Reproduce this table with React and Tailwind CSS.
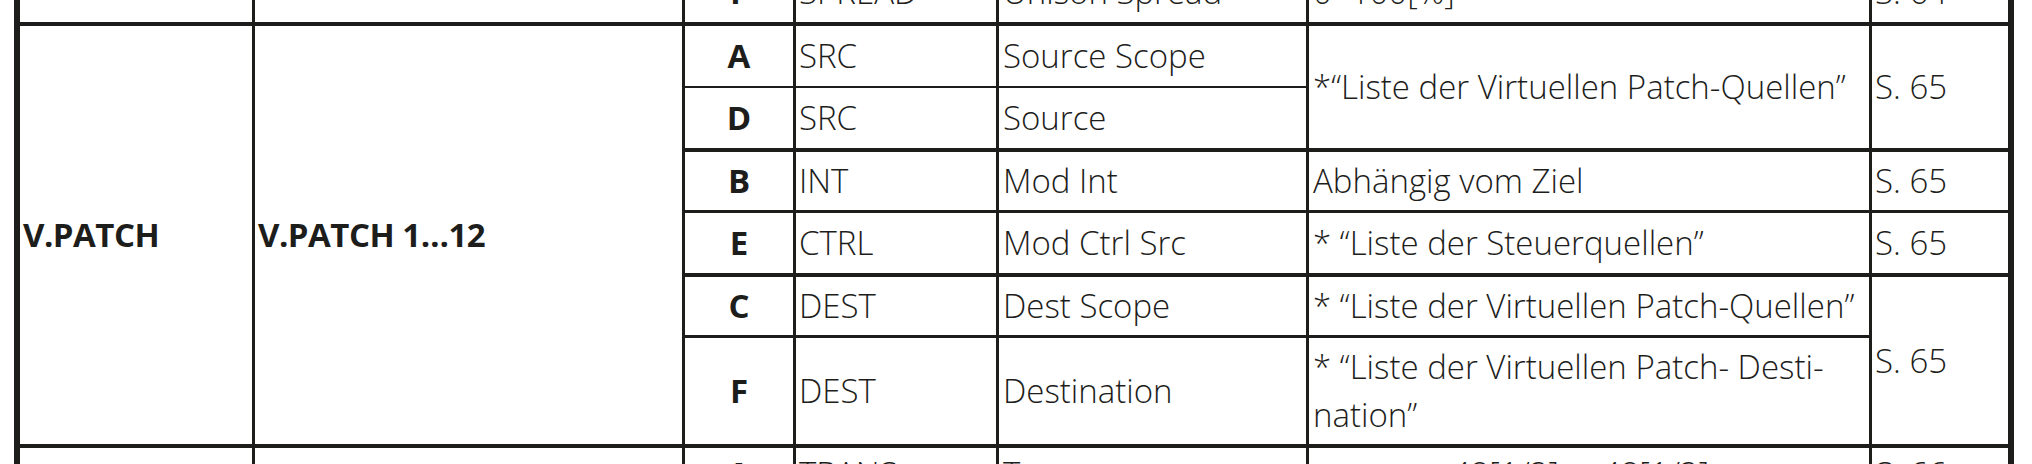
import React from "react";

const line = "border-[#1d1d1b]";
const cell = `flex items-center overflow-hidden whitespace-nowrap ${line}`;

const Cell = ({ className = "", children }) => (
  <div className={`${cell} ${className}`}>{children}</div>
);

const Key = ({ className = "", children }) => (
  <Cell className={`justify-center font-bold border-l-[3px] ${className}`}>{children}</Cell>
);

export default function App() {
  return (
    <div className="w-[2032px] h-[464px] overflow-hidden bg-white text-[#1d1d1b] font-['Open_Sans',sans-serif] text-[33px] leading-[48px] font-light">
      <div className="ml-[14px] mt-[-38px] w-[2000px] border-x-[6px] border-[#1d1d1b] grid grid-cols-[232px_430px_111px_203px_310px_563px_139px] grid-rows-[60px_64px_62px_62px_63px_62px_109px_56px]">
        {/* previous group, last row */}
        <Cell className="col-start-1 row-start-1" />
        <Cell className="col-start-2 row-start-1 border-l-[3px]" />
        <Key className="col-start-3 row-start-1">F</Key>
        <Cell className="col-start-4 row-start-1 border-l-[3px] pl-[3px]">SPREAD</Cell>
        <Cell className="col-start-5 row-start-1 border-l-[3px] pl-[4px]">Unison Spread</Cell>
        <Cell className="col-start-6 row-start-1 border-l-[3px] pl-[4px]">0~100[%]</Cell>
        <Cell className="col-start-7 row-start-1 border-l-[3px] pl-[3px]">S. 64</Cell>

        {/* V.PATCH */}
        <Cell className="col-start-1 row-start-2 row-span-6 border-t-4 pl-[3px] font-bold tracking-[-0.5px]">V.PATCH</Cell>
        <Cell className="col-start-2 row-start-2 row-span-6 border-t-4 border-l-[3px] pl-[3px] font-bold tracking-[-0.5px]">V.PATCH 1…12</Cell>

        <Key className="col-start-3 row-start-2 border-t-4">A</Key>
        <Cell className="col-start-4 row-start-2 border-t-4 border-l-[3px] pl-[3px]">SRC</Cell>
        <Cell className="col-start-5 row-start-2 border-t-4 border-l-[3px] pl-[4px]">Source Scope</Cell>
        <Cell className="col-start-6 row-start-2 row-span-2 border-t-4 border-l-[3px] pl-[4px]">*“Liste der Virtuellen Patch-Quellen”</Cell>
        <Cell className="col-start-7 row-start-2 row-span-2 border-t-4 border-l-[3px] pl-[3px]">S. 65</Cell>

        <Key className="col-start-3 row-start-3 border-t-2">D</Key>
        <Cell className="col-start-4 row-start-3 border-t-2 border-l-[3px] pl-[3px]">SRC</Cell>
        <Cell className="col-start-5 row-start-3 border-t-2 border-l-[3px] pl-[4px]">Source</Cell>

        <Key className="col-start-3 row-start-4 border-t-4">B</Key>
        <Cell className="col-start-4 row-start-4 border-t-4 border-l-[3px] pl-[3px]">INT</Cell>
        <Cell className="col-start-5 row-start-4 border-t-4 border-l-[3px] pl-[4px]">Mod Int</Cell>
        <Cell className="col-start-6 row-start-4 border-t-4 border-l-[3px] pl-[4px]">Abhängig vom Ziel</Cell>
        <Cell className="col-start-7 row-start-4 border-t-4 border-l-[3px] pl-[3px]">S. 65</Cell>

        <Key className="col-start-3 row-start-5 border-t-[3px]">E</Key>
        <Cell className="col-start-4 row-start-5 border-t-[3px] border-l-[3px] pl-[3px]">CTRL</Cell>
        <Cell className="col-start-5 row-start-5 border-t-[3px] border-l-[3px] pl-[4px]">Mod Ctrl Src</Cell>
        <Cell className="col-start-6 row-start-5 border-t-[3px] border-l-[3px] pl-[4px]">* “Liste der Steuerquellen”</Cell>
        <Cell className="col-start-7 row-start-5 border-t-[3px] border-l-[3px] pl-[3px]">S. 65</Cell>

        <Key className="col-start-3 row-start-6 border-t-4">C</Key>
        <Cell className="col-start-4 row-start-6 border-t-4 border-l-[3px] pl-[3px]">DEST</Cell>
        <Cell className="col-start-5 row-start-6 border-t-4 border-l-[3px] pl-[4px]">Dest Scope</Cell>
        <Cell className="col-start-6 row-start-6 border-t-4 border-l-[3px] pl-[4px]">* “Liste der Virtuellen Patch-Quellen”</Cell>
        <Cell className="col-start-7 row-start-6 row-span-2 border-t-4 border-l-[3px] pl-[3px]">S. 65</Cell>

        <Key className="col-start-3 row-start-7 border-t-[3px]">F</Key>
        <Cell className="col-start-4 row-start-7 border-t-[3px] border-l-[3px] pl-[3px]">DEST</Cell>
        <Cell className="col-start-5 row-start-7 border-t-[3px] border-l-[3px] pl-[4px]">Destination</Cell>
        <Cell className="col-start-6 row-start-7 border-t-[3px] border-l-[3px] pl-[4px]">
          <span>
            * “Liste der Virtuellen Patch- Desti-
            <br />
            nation”
          </span>
        </Cell>

        {/* next group, first row */}
        <Cell className="col-start-1 row-start-8 border-t-4" />
        <Cell className="col-start-2 row-start-8 border-t-4 border-l-[3px]" />
        <Key className="col-start-3 row-start-8 border-t-4">A</Key>
        <Cell className="col-start-4 row-start-8 border-t-4 border-l-[3px] pl-[3px]">TRANS</Cell>
        <Cell className="col-start-5 row-start-8 border-t-4 border-l-[3px] pl-[4px]">Transpose</Cell>
        <Cell className="col-start-6 row-start-8 border-t-4 border-l-[3px] pl-[126px]">–48[1/2]…+48[1/2]</Cell>
        <Cell className="col-start-7 row-start-8 border-t-4 border-l-[3px] pl-[3px]">S. 66</Cell>
      </div>
    </div>
  );
}
